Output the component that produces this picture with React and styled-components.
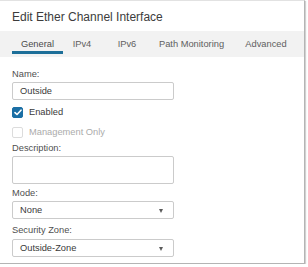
import React from "react";
import styled, { createGlobalStyle } from "styled-components";

const Global = createGlobalStyle`
  html, body { margin: 0; padding: 0; background: #ffffff; }
  body { font-family: "Liberation Sans", Arial, sans-serif; }
`;

const Panel = styled.div`
  width: 304px;
  background: #fff;
  border-top: 1px solid #e2e2e2;
  border-right: 1px solid #b4b4b4;
  border-bottom: 1px solid #b4b4b4;
  box-shadow: 1px 1px 1px rgba(0, 0, 0, 0.18);
  padding-bottom: 6px;
`;

const Header = styled.div`
  height: 30px;
  display: flex;
  align-items: center;
  padding-left: 12px;
  padding-top: 1px;
  box-sizing: border-box;
  font-size: 12px;
  color: #3c3c3c;
`;

const TabBar = styled.div`
  height: 26px;
  background: #f2f2f2;
  display: flex;
  align-items: flex-start;
  padding-left: 12px;
`;

const Tab = styled.div`
  width: ${(p) => p.$w}px;
  flex-shrink: 0;
  height: 23px;
  box-sizing: border-box;
  padding-top: 8px;
  line-height: 11px;
  text-align: center;
  font-size: 9.3px;
  white-space: nowrap;
  color: ${(p) => (p.$active ? "#4a4a4a" : "#606060")};
  border-bottom: 3px solid ${(p) => (p.$active ? "#1d6f99" : "transparent")};
`;

const Form = styled.div`
  display: flex;
  flex-direction: column;
  padding: 11px 0 0 12px;
`;

const Label = styled.div`
  margin-top: ${(p) => p.$mt || 0}px;
  height: 12px;
  line-height: 12px;
  font-size: 9.3px;
  color: #4f4f4f;
`;

const Field = styled.div`
  margin-top: ${(p) => p.$mt || 0}px;
  width: 162px;
  height: ${(p) => p.$h || 18}px;
  box-sizing: border-box;
  border: 1px solid #cbcbcb;
  border-radius: 2px;
  background: #fff;
  display: flex;
  align-items: center;
  justify-content: space-between;
  padding: 0 10px 0 7px;
  font-size: 9.3px;
  color: #3a3a3a;
`;

const Arrow = styled.span`
  width: 0;
  height: 0;
  border-left: 2.5px solid transparent;
  border-right: 2.5px solid transparent;
  border-top: 4px solid #5a5a5a;
  margin-top: 1px;
`;

const CheckRow = styled.div`
  margin-top: ${(p) => p.$mt || 0}px;
  height: 12px;
  display: flex;
  align-items: center;
  gap: 6px;
  font-size: 9.3px;
  color: ${(p) => (p.$disabled ? "#ababab" : "#3a3a3a")};
`;

const Box = styled.span`
  width: 11px;
  height: 11px;
  box-sizing: border-box;
  border-radius: 2px;
  display: flex;
  align-items: center;
  justify-content: center;
  background: ${(p) => (p.$checked ? "#1b6fa5" : "#fff")};
  border: 1px solid ${(p) => (p.$checked ? "#1b6fa5" : "#dcdcdc")};
`;

const tabs = [
  { name: "General", w: 51, active: true },
  { name: "IPv4", w: 38 },
  { name: "IPv6", w: 52 },
  { name: "Path Monitoring", w: 77 },
  { name: "Advanced", w: 72 },
];

export default function App() {
  return (
    <>
      <Global />
      <Panel>
        <Header>Edit Ether Channel Interface</Header>
        <TabBar>
          {tabs.map((t) => (
            <Tab key={t.name} $w={t.w} $active={t.active}>
              {t.name}
            </Tab>
          ))}
        </TabBar>
        <Form>
          <Label>Name:</Label>
          <Field $mt={2}>Outside</Field>
          <CheckRow $mt={6}>
            <Box $checked>
              <svg width="8" height="7" viewBox="0 0 8 7">
                <path d="M1 3.6 L3 5.5 L7 1.2" fill="none" stroke="#fff" strokeWidth="1.6" strokeLinecap="round" strokeLinejoin="round" />
              </svg>
            </Box>
            Enabled
          </CheckRow>
          <CheckRow $mt={8} $disabled>
            <Box />
            Management Only
          </CheckRow>
          <Label $mt={4}>Description:</Label>
          <Field $mt={2} $h={28} />
          <Label $mt={3}>Mode:</Label>
          <Field $mt={2}>
            None
            <Arrow />
          </Field>
          <Label $mt={5}>Security Zone:</Label>
          <Field $mt={3}>
            Outside-Zone
            <Arrow />
          </Field>
        </Form>
      </Panel>
    </>
  );
}
